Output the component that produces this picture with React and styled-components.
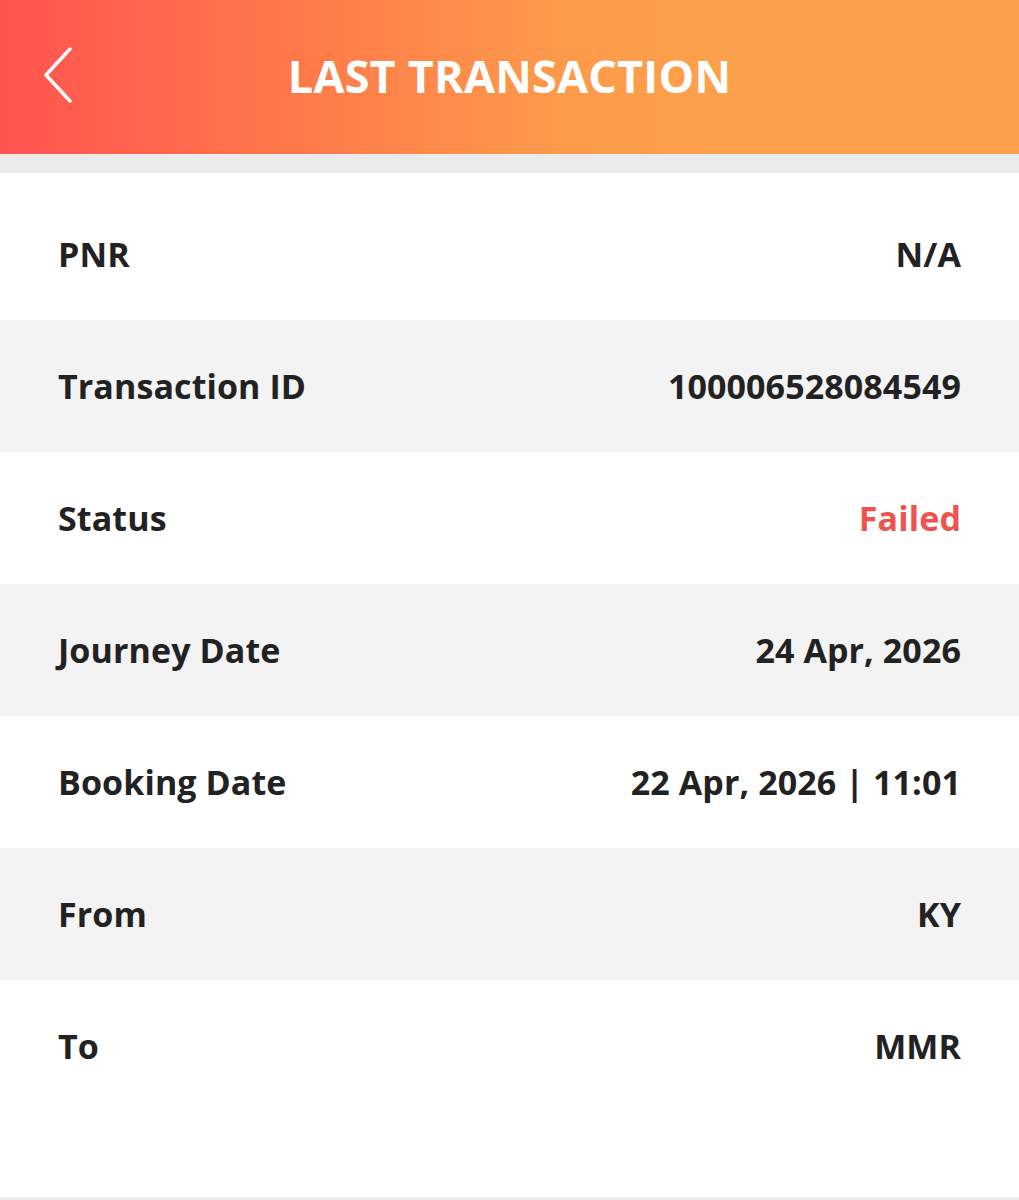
import { createGlobalStyle } from "styled-components";
import styled from "styled-components";

const Global = createGlobalStyle`
  body {
    margin: 0;
    background: #ffffff;
    font-family: 'Open Sans', 'Noto Sans', sans-serif;
  }
`;

const Page = styled.div`
  width: 100%;
  min-height: 1200px;
  display: flex;
  flex-direction: column;
  background: #fff;
`;

const Header = styled.div`
  height: 154px;
  display: flex;
  align-items: center;
  justify-content: center;
  position: relative;
  background: linear-gradient(90deg, #ff5350 0%, #fe7a4a 30%, #fd9a4a 55%, #fda04b 70%, #fda04b 100%);
`;

const Back = styled.button`
  position: absolute;
  left: 38px;
  top: 44px;
  width: 40px;
  height: 62px;
  border: 0;
  padding: 0;
  background: transparent;
  display: flex;
  align-items: center;
  justify-content: center;
`;

const Title = styled.h1`
  margin: 0 0 4px;
  color: #fff;
  font-size: 45px;
  font-weight: 700;
  letter-spacing: 0.2px;
`;

const Gap = styled.div`
  height: 19px;
  background: #ebebeb;
`;

const List = styled.div`
  padding: 15px 0 85px;
  border-bottom: 3px solid #ebebeb;
`;

const Row = styled.div`
  height: 132px;
  display: flex;
  align-items: center;
  justify-content: space-between;
  padding: 0 58px;
  background: ${(props) => (props.shade ? "#f3f3f3" : "#ffffff")};
  font-size: 34px;
  font-weight: 700;
  color: #222222;
  letter-spacing: 0.1px;
`;

const Value = styled.span`
  color: ${(props) => (props.danger ? "#ee5350" : "#222222")};
`;

const rows = [
  ["PNR", "N/A"],
  ["Transaction ID", "100006528084549"],
  ["Status", "Failed", true],
  ["Journey Date", "24 Apr, 2026"],
  ["Booking Date", "22 Apr, 2026 | 11:01"],
  ["From", "KY"],
  ["To", "MMR"],
];

export default function App() {
  return (
    <>
      <Global />
      <Page>
        <Header>
          <Back aria-label="back">
            <svg width="32" height="58" viewBox="0 0 32 58" fill="none">
              <path d="M28 3 L4 29 L28 55" stroke="#fff" strokeWidth="3.5" strokeLinecap="round" strokeLinejoin="round" />
            </svg>
          </Back>
          <Title>LAST TRANSACTION</Title>
        </Header>
        <Gap />
        <List>
          {rows.map(([label, value, danger], i) => (
            <Row key={label} shade={i % 2 === 1}>
              <span>{label}</span>
              <Value danger={danger}>{value}</Value>
            </Row>
          ))}
        </List>
      </Page>
    </>
  );
}
